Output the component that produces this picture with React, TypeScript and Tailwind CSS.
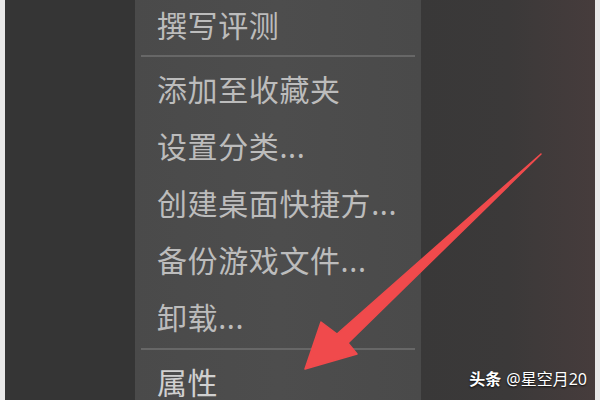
import React from "react";

const cjk = "font-['Noto_Sans','Noto_Sans_CJK_SC',sans-serif]";

const middleItems = ["添加至收藏夹", "设置分类...", "创建桌面快捷方...", "备份游戏文件...", "卸载..."];

function MenuItem({ label, bright }: { label: string; bright?: boolean }) {
  return (
    <div
      className={`shrink-0 h-[57px] flex items-center pl-[22px] text-[30px] leading-none whitespace-nowrap tracking-[0.6px] ${
        bright ? "text-[#d0d0d0]" : "text-[#bcbcbc]"
      }`}
    >
      {label}
    </div>
  );
}

function Separator() {
  return <div className="shrink-0 h-[2px] mx-[6px] bg-[#676767]" />;
}

export default function App() {
  return (
    <div className={`relative w-[600px] h-[400px] overflow-hidden flex ${cjk}`}>
      <div className="w-[5px] bg-[#e9e9e9]" />
      <div className="w-[130px] bg-[#353535]" />

      <div className="w-[286px] overflow-hidden bg-gradient-to-r from-[#4a4a4a] via-[#4d4d4d] to-[#4a4a4a] flex flex-col">
        <div className="shrink-0 h-[52px] flex items-center pl-[22px] text-[30px] leading-none tracking-[0.6px] text-[#bcbcbc]">
          撰写评测
        </div>
        <div className="shrink-0 mt-[3px]">
          <Separator />
        </div>
        <div className="shrink-0 pt-[4px] flex flex-col">
          {middleItems.map((label) => (
            <MenuItem key={label} label={label} />
          ))}
        </div>
        <div className="shrink-0 mt-[2px]">
          <Separator />
        </div>
        <div className="shrink-0 pt-[4px] flex flex-col">
          <MenuItem label="属性" bright />
        </div>
      </div>

      <div className="flex-1 bg-gradient-to-r from-[#393838] via-[#3b3939] to-[#463c3c]" />
      <div className="w-[5px] bg-[#e9e9e9]" />

      {/* red pointer arrow */}
      <svg className="absolute inset-0 pointer-events-none" width="600" height="400" viewBox="0 0 600 400">
        <polygon
          points="541,154 337,334 321,322 305,369 357,354 348,343"
          fill="#f04a4c"
          stroke="#f04a4c"
          strokeWidth="1.5"
          strokeLinejoin="round"
        />
      </svg>

      {/* watermark */}
      <div className="absolute right-[13px] bottom-[13px] flex items-center gap-[5px] text-[16px] leading-none text-white [text-shadow:0_1px_2px_rgba(0,0,0,0.9)]">
        <span className="font-bold">头条</span>
        <span>@星空月20</span>
      </div>
    </div>
  );
}
